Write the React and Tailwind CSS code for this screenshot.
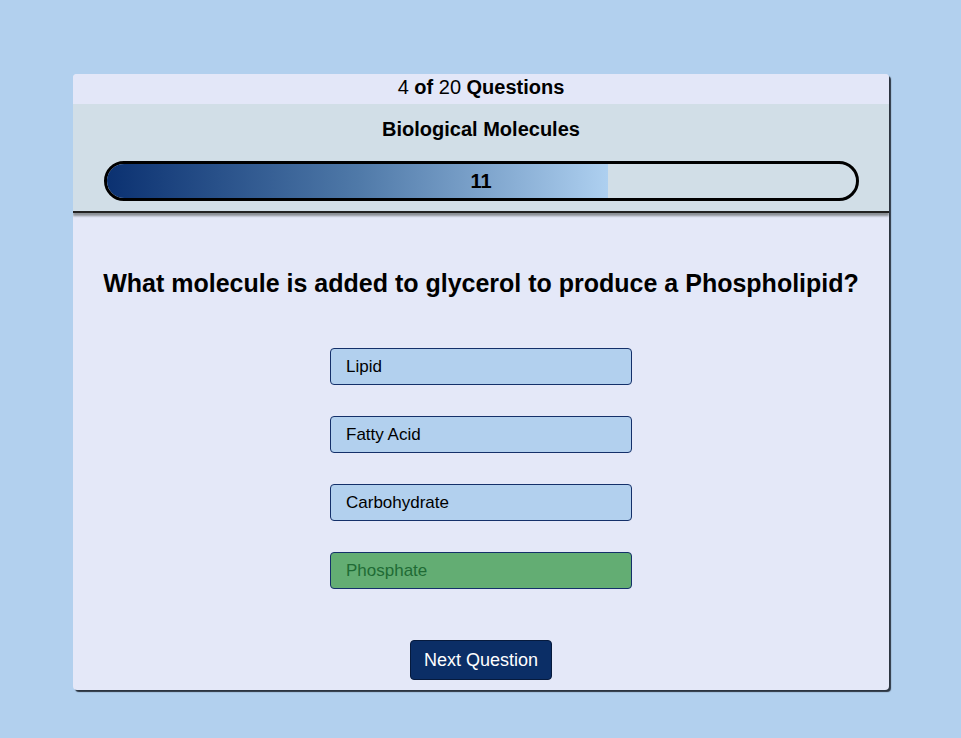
export default function App() {
  const options = [
    { label: 'Lipid', correct: false },
    { label: 'Fatty Acid', correct: false },
    { label: 'Carbohydrate', correct: false },
    { label: 'Phosphate', correct: true },
  ];
  const progress = 67;

  return (
    <div className="min-h-screen w-full bg-[#b2d0ee] pt-[74px] font-['Liberation_Sans',Arial,sans-serif] text-black">
      <div className="ml-[73px] w-[816px] h-[616px] rounded-[4px] bg-[#e4e8f8] shadow-[2px_2px_1px_#2b3440] overflow-hidden flex flex-col">
        {/* Header */}
        <div className="h-[30px] flex items-start justify-center pt-[1px] text-[20px] leading-[24px] bg-[#e3e7f8]">
          <span>4 <b>of</b> 20 <b>Questions</b></span>
        </div>
        <div className="h-[109px] bg-[#d1dee7] border-b-2 border-[#222] shadow-[0_3px_2px_#8a8f95] flex flex-col items-center">
          <p className="mt-[13px] text-[20px] font-bold leading-[24px]">Biological Molecules</p>
          <div className="relative mt-[20px] w-[755px] h-[40px] rounded-full border-[3px] border-black overflow-hidden bg-[#d1dee7]">
            <div
              className="h-full bg-gradient-to-r from-[#0b3171] via-[#4f79a8] to-[#aed0f0]"
              style={{ width: `${progress}%` }}
            />
            <span className="absolute inset-0 flex items-center justify-center text-[20px] font-bold">11</span>
          </div>
        </div>

        {/* Question */}
        <div className="flex-1 flex flex-col items-center">
          <h2 className="mt-[55px] text-[25px] font-bold leading-[30px]">
            What molecule is added to glycerol to produce a Phospholipid?
          </h2>
          <div className="mt-[50px] flex flex-col gap-[31px]">
            {options.map((o, i) => (
              <button
                key={i}
                className={`w-[302px] h-[37px] rounded-[4px] border border-[#14306a] text-left pl-[15px] text-[17px] ${
                  o.correct ? 'bg-[#63ad73] text-[#1f6b35]' : 'bg-[#b2d0ee] text-black'
                }`}
              >
                {o.label}
              </button>
            ))}
          </div>
          <button className="mt-[51px] w-[142px] h-[40px] rounded-[4px] bg-[#0b2e66] border border-[#061a3d] text-white text-[18px]">
            Next Question
          </button>
        </div>
      </div>
    </div>
  );
}
